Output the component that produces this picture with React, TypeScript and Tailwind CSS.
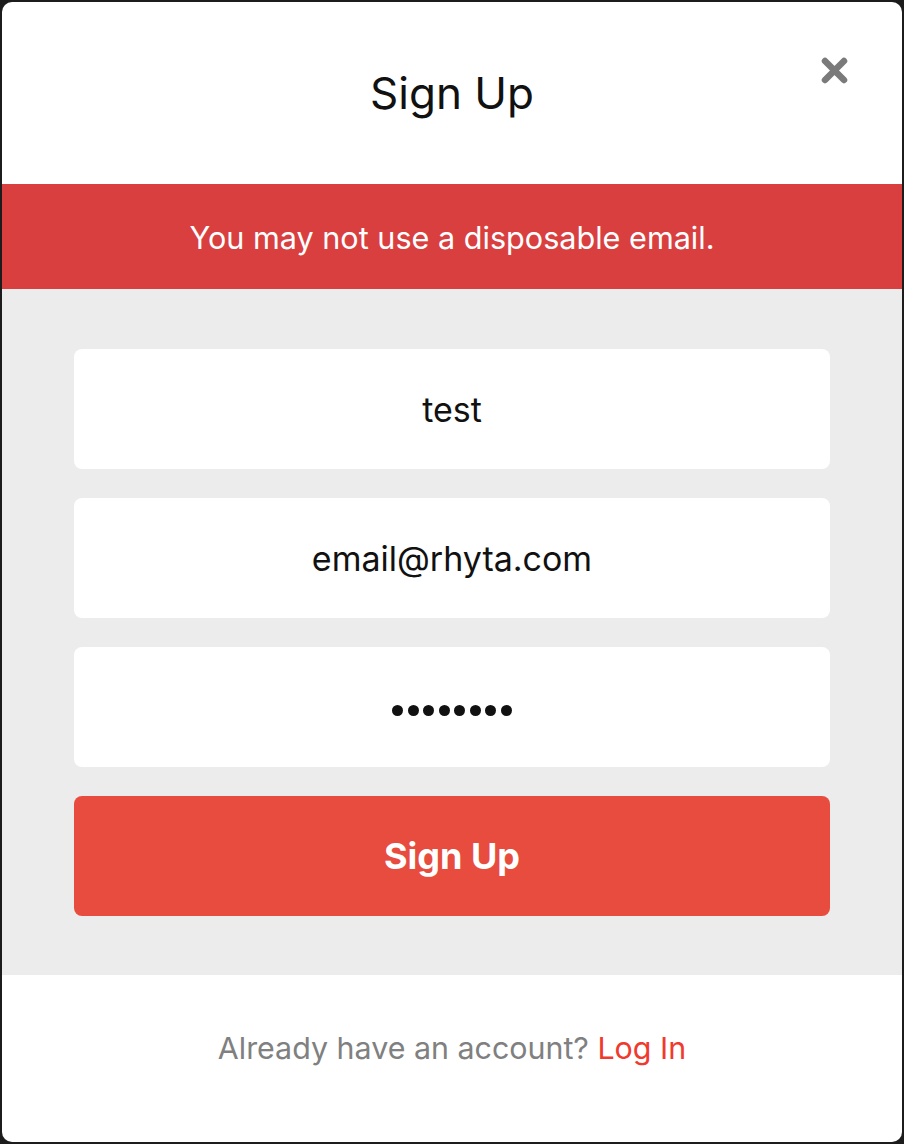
export default function App() {
  return (
    <div className="w-[904px] h-[1144px] bg-[#1c1c1c] p-[2px]" style={{ fontFamily: "Inter, 'Noto Sans', sans-serif" }}>
      <div className="relative flex h-full w-full flex-col overflow-hidden rounded-[10px] bg-white">
        <button className="absolute right-[54px] top-[55px] text-[#7a7a7a]" aria-label="Close">
          <svg width="27" height="27" viewBox="0 0 27 27">
            <path d="M4 4 L23 23 M23 4 L4 23" stroke="currentColor" strokeWidth="6.5" strokeLinecap="round" />
          </svg>
        </button>
        <div className="flex h-[182px] items-center justify-center">
          <h1 className="text-[44px] font-normal text-[#111]">Sign Up</h1>
        </div>
        <div className="flex h-[105px] items-center justify-center bg-[#d93f3f] pt-[3px]">
          <p className="text-[30.6px] text-white">You may not use a disposable email.</p>
        </div>
        <div className="flex flex-col gap-[29px] bg-[#ececec] px-[72px] pb-[59px] pt-[60px]">
          <div className="flex h-[120px] items-center justify-center rounded-[8px] bg-white text-[34px] text-[#111]">test</div>
          <div className="flex h-[120px] items-center justify-center rounded-[8px] bg-white text-[34px] text-[#111]">email@rhyta.com</div>
          <div className="flex h-[120px] items-center justify-center gap-[4.5px] rounded-[8px] bg-white pt-[6px]" aria-label="password">
            <span className="h-[11px] w-[11px] rounded-full bg-[#111]" />
            <span className="h-[11px] w-[11px] rounded-full bg-[#111]" />
            <span className="h-[11px] w-[11px] rounded-full bg-[#111]" />
            <span className="h-[11px] w-[11px] rounded-full bg-[#111]" />
            <span className="h-[11px] w-[11px] rounded-full bg-[#111]" />
            <span className="h-[11px] w-[11px] rounded-full bg-[#111]" />
            <span className="h-[11px] w-[11px] rounded-full bg-[#111]" />
            <span className="h-[11px] w-[11px] rounded-full bg-[#111]" />
          </div>
          <button className="flex h-[120px] items-center justify-center rounded-[8px] bg-[#e74c3e] text-[36px] font-bold text-white">Sign Up</button>
        </div>
        <div className="flex flex-1 items-center justify-center pb-[20px]">
          <p className="text-[30.4px] text-[#808080]">
            Already have an account? <span className="text-[#f03a2e]">Log In</span>
          </p>
        </div>
      </div>
    </div>
  );
}
